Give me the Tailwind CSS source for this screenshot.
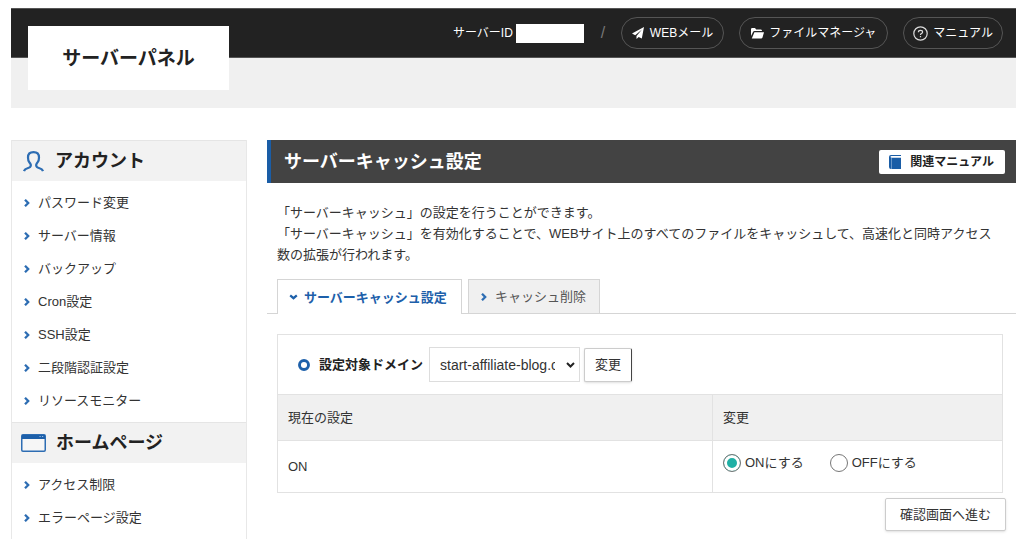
<!DOCTYPE html>
<html lang="ja">
<head>
<meta charset="utf-8">
<meta name="viewport" content="width=device-width, initial-scale=1">
<title>サーバーパネル</title>
<script src="https://cdn.jsdelivr.net/npm/@tailwindcss/browser@4"></script>
</head>
<body class="flex min-h-screen flex-col bg-white pt-2 pr-2 pl-[11px] font-['Liberation_Sans','Noto_Sans_CJK_JP',sans-serif] text-[13px] leading-[21px] text-[#333]">
<svg class="hidden" aria-hidden="true">
  <symbol id="chev" viewBox="0 0 6 8"><path d="M1 .8 4.200 4 1 7.200" fill="none" stroke="#2d6db3" stroke-width="2.300"/></symbol>
</svg>

<header class="relative">
  <div class="flex h-[50px] items-center justify-end border-y border-[#555] bg-[#222] pr-[13px] text-xs text-white">
    <span>サーバーID</span>
    <span class="ml-[3px] h-[19px] w-[68px] bg-white"></span>
    <span class="mr-[15px] ml-[17px] w-[5px] text-base text-[#777]">/</span>
    <nav class="flex gap-[15px]">
      <a href="#" class="flex h-8 items-center gap-1.5 rounded-full border border-[#555] px-[10px]">
        <svg class="size-3" viewBox="0 0 12 12" fill="#fff"><path d="M12 0 0 6.500 3.200 8.200 10 2.500 4.500 9v3L6.700 9.900 9.800 11.500z"/></svg>
        <span>WEBメール</span></a>
      <a href="#" class="flex h-8 items-center gap-[5px] rounded-full border border-[#555] px-[11px]">
        <svg class="h-[11px] w-[13px]" viewBox="0 0 13 11" fill="#fff"><path d="M0 8V1.200Q0 0 1.200 0H4l1.200 1.500H10Q11 1.500 11 3H3.500Q2.500 3 2 4z"/><path d="M3.400 4.200H13L11.500 9.500Q11.200 10.500 10 10.500H.800z"/></svg>
        <span>ファイルマネージャ</span></a>
      <a href="#" class="flex h-8 items-center gap-[5px] rounded-full border border-[#555] px-[9px]">
        <svg class="size-[15px]" viewBox="0 0 15 15" fill="none" stroke="#ddd"><circle cx="7.500" cy="7.500" r="6.700" stroke-width="1.200"/><path d="M5.400 6.200Q5.400 4.300 7.500 4.300T9.600 6Q9.600 7 8.500 7.500T7.500 9M7.500 10v1.300" stroke-width="1.200"/></svg>
        <span>マニュアル</span></a>
    </nav>
  </div>
  <div class="h-[50px] bg-[#f0f0f0]"></div>
  <h1 class="absolute top-[18px] left-[17px] flex h-16 w-[201px] items-center justify-center bg-white text-[19px] font-bold text-[#222]">サーバーパネル</h1>
</header>

<div class="mt-8 flex grow gap-5">
  <aside class="w-[236px] shrink-0 border-x border-[#e8e8e8]">
    <h2 class="flex h-[41px] items-center gap-[11px] border-t border-[#e5e5e5] bg-[#f2f2f2] pl-[11px] text-lg font-bold text-[#222]">
      <svg class="h-[21px] w-[21px]" viewBox="0 0 21 21" fill="none" stroke="#2d6db3" stroke-width="2.200"><path d="M1 20Q1.800 17.800 4.500 17.200Q8.200 16.300 7.800 13.800Q7.500 12.700 6.300 11.200Q5 9.500 5 6.500Q5 1.200 10.500 1.200T16 6.500Q16 9.500 14.700 11.200Q13.500 12.700 13.200 13.800Q12.800 16.300 16.500 17.200Q19.200 17.800 20 20"/></svg>
      アカウント</h2>
    <ul class="py-[5px]">
      <li class="flex h-[33px] items-center gap-2 pl-3"><svg class="h-2 w-1.5"><use href="#chev"/></svg><a href="#">パスワード変更</a></li>
      <li class="flex h-[33px] items-center gap-2 pl-3"><svg class="h-2 w-1.5"><use href="#chev"/></svg><a href="#">サーバー情報</a></li>
      <li class="flex h-[33px] items-center gap-2 pl-3"><svg class="h-2 w-1.5"><use href="#chev"/></svg><a href="#">バックアップ</a></li>
      <li class="flex h-[33px] items-center gap-2 pl-3"><svg class="h-2 w-1.5"><use href="#chev"/></svg><a href="#">Cron設定</a></li>
      <li class="flex h-[33px] items-center gap-2 pl-3"><svg class="h-2 w-1.5"><use href="#chev"/></svg><a href="#">SSH設定</a></li>
      <li class="flex h-[33px] items-center gap-2 pl-3"><svg class="h-2 w-1.5"><use href="#chev"/></svg><a href="#">二段階認証設定</a></li>
      <li class="flex h-[33px] items-center gap-2 pl-3"><svg class="h-2 w-1.5"><use href="#chev"/></svg><a href="#">リソースモニター</a></li>
    </ul>
    <h2 class="flex h-[41px] items-center gap-[10px] border-t border-[#e5e5e5] bg-[#f2f2f2] pl-[9px] text-lg font-bold text-[#222]">
      <svg class="h-[18px] w-[25px]" viewBox="0 0 25 18"><rect x=".75" y=".75" width="23.500" height="16.500" rx="1.200" fill="#f6f6f6" stroke="#2d6db3" stroke-width="1.500"/><path d="M1 1H24V5H1z" fill="#1d60aa"/><path d="M18.500 2.500h1.200M21 2.500h1.200" stroke="#9dbde0" stroke-width="1"/></svg>
      ホームページ</h2>
    <ul class="py-[5px]">
      <li class="flex h-[33px] items-center gap-2 pl-3"><svg class="h-2 w-1.5"><use href="#chev"/></svg><a href="#">アクセス制限</a></li>
      <li class="flex h-[33px] items-center gap-2 pl-3"><svg class="h-2 w-1.5"><use href="#chev"/></svg><a href="#">エラーページ設定</a></li>
    </ul>
  </aside>

  <main class="min-w-0 grow">
    <div class="flex h-[43px] items-center justify-between border-l-4 border-[#1a5da6] bg-[#434343] pr-[11px] pl-[13px]">
      <h2 class="text-lg font-bold text-white">サーバーキャッシュ設定</h2>
      <a href="#" class="flex h-6 items-center gap-[9px] rounded-xs bg-white pr-[11px] pl-[10px] text-xs font-bold text-[#222]">
        <svg class="h-[14px] w-3" viewBox="0 0 12 14"><path d="M2 0H12V1H2.500Q1.500 1 1.500 1.800T2.500 2.700H12V14H2Q0 14 0 12V2Q0 0 2 0z" fill="#1a5da6"/><path d="M2.500 3V14" stroke="#7fa6d0" stroke-width=".8"/></svg>
        関連マニュアル</a>
    </div>

    <div class="mt-[19px] pr-4 pl-[10px]">
      <p>「サーバーキャッシュ」の設定を行うことができます。</p>
      <p>「サーバーキャッシュ」を有効化することで、WEBサイト上のすべてのファイルをキャッシュして、高速化と同時アクセス数の拡張が行われます。</p>
    </div>

    <div class="mt-[14px] flex gap-1.5 border-b border-[#d5d5d5] pl-[10px]">
      <a href="#" class="-mb-px flex h-[35px] items-center gap-1.5 border border-b-0 border-[#d5d5d5] bg-white pr-[14px] pl-[11px] font-bold text-[#1d60aa]">
        <svg class="h-2 w-[9px]" viewBox="0 0 9 8"><path d="M1.200 2.300 4.500 5.200 7.800 2.300" fill="none" stroke="#1d60aa" stroke-width="2.200"/></svg>
        サーバーキャッシュ設定</a>
      <a href="#" class="flex h-[34px] items-center gap-2 border border-b-0 border-[#d5d5d5] bg-[#f0f0f0] pr-[13px] pl-3 text-[#555]">
        <svg class="h-2 w-1.5"><use href="#chev"/></svg>
        キャッシュ削除</a>
    </div>

    <form class="mt-5 pr-[10px] pl-[10px]">
      <div class="pr-[3px]">
      <table class="w-full border-collapse text-left">
        <thead>
          <tr class="h-[60px]">
            <td colspan="2" class="border border-[#e2e2e2] pl-5">
              <div class="flex items-center">
                <svg class="mr-[9px] size-3" viewBox="0 0 12 12"><circle cx="6" cy="6" r="4.500" fill="none" stroke="#1d60aa" stroke-width="2.900"/></svg>
                <label for="domain" class="mr-1.5 font-bold text-[#222]">設定対象ドメイン</label>
                <div class="relative mr-1">
                  <select id="domain" class="h-[35px] w-[151px] appearance-none overflow-hidden border border-[#ddd] bg-white pr-6 pl-[10px] font-['Liberation_Sans',sans-serif] text-sm text-[#333]"><option>start-affiliate-blog.com</option></select>
                  <svg class="pointer-events-none absolute top-[14px] right-[5px] h-2 w-[9px]" viewBox="0 0 9 8"><path d="M1 2 4.500 5.500 8 2" fill="none" stroke="#222" stroke-width="2"/></svg>
                </div>
                <button type="button" class="h-[34px] w-12 rounded-xs border border-[#ccc] border-r-[#444] bg-white shadow-sm">変更</button>
              </div>
            </td>
          </tr>
          <tr class="h-[46px] bg-[#f0f0f0]">
            <th class="w-3/5 border border-[#e2e2e2] pl-[10px] font-normal">現在の設定</th>
            <th class="border border-[#e2e2e2] pl-[10px] font-normal">変更</th>
          </tr>
        </thead>
        <tbody>
          <tr class="h-[52px]">
            <td class="border border-[#e2e2e2] pl-[10px]">ON</td>
            <td class="border border-[#e2e2e2] pb-2 pl-[10px]">
              <div class="flex gap-[26px]">
                <label class="flex items-center gap-1"><input type="radio" name="cache" checked class="size-[18px] appearance-none rounded-full border border-[#777] bg-white checked:bg-[#1fb0a5] checked:inset-ring-[3px] checked:inset-ring-white">ONにする</label>
                <label class="flex items-center gap-1"><input type="radio" name="cache" class="size-[18px] appearance-none rounded-full border border-[#777] bg-white checked:bg-[#1fb0a5] checked:inset-ring-[3px] checked:inset-ring-white">OFFにする</label>
              </div>
            </td>
          </tr>
        </tbody>
      </table>
      </div>
      <div class="mt-[5px] flex justify-end">
        <button type="button" class="h-[33px] rounded-xs border border-[#ccc] bg-white px-[14px] shadow-sm">確認画面へ進む</button>
      </div>
    </form>
  </main>
</div>
</body>
</html>
